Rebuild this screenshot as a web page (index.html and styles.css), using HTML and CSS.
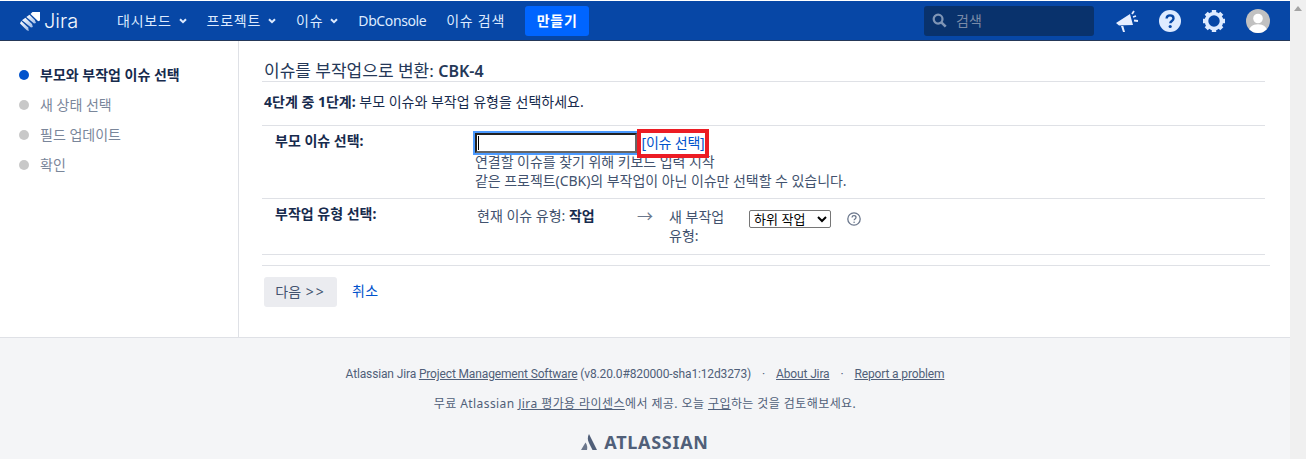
FILE: index.html
```html
<!DOCTYPE html>
<html lang="ko">
<head>
<meta charset="utf-8">
<title>이슈를 부작업으로 변환: CBK-4</title>
<link rel="stylesheet" href="styles.css">
</head>
<body>
<div class="page">
  <header class="topbar">
    <a class="logo" href="#">
      <svg class="logo-mark" viewBox="0 0 20 20" width="20" height="20">
        <defs>
          <linearGradient id="fade" x1="0" y1="0" x2="1" y2="1"><stop offset="0" stop-color="#fff"/><stop offset="1" stop-color="#9fbbe6"/></linearGradient>
        </defs>
        <path d="M20 1v8.500l-1.800.8L10.500 3 12.500 1z" fill="#fff"/>
        <path d="M9.500 3.800 14.800 9l1.200 3-2 .6L6.300 6z" fill="url(#fade)"/>
        <path d="M5.400 6.800 12 13l.9 3-1.900.5L2 9.200z" fill="url(#fade)"/>
        <path d="M1.200 10 8.200 16.600 8.800 20 6.800 19.300 0 12.500z" fill="url(#fade)"/>
      </svg>
      <span class="logo-text">Jira</span>
    </a>
    <nav class="nav">
      <a class="nav-item kr" href="#">대시보드<svg class="caret" viewBox="0 0 8 6" width="8" height="6"><path d="M1 1.200 4 4.200 7 1.200" fill="none" stroke="#deebff" stroke-width="2"/></svg></a>
      <a class="nav-item kr" href="#">프로젝트<svg class="caret" viewBox="0 0 8 6" width="8" height="6"><path d="M1 1.200 4 4.200 7 1.200" fill="none" stroke="#deebff" stroke-width="2"/></svg></a>
      <a class="nav-item kr" href="#">이슈<svg class="caret" viewBox="0 0 8 6" width="8" height="6"><path d="M1 1.200 4 4.200 7 1.200" fill="none" stroke="#deebff" stroke-width="2"/></svg></a>
      <a class="nav-item latin" href="#">DbConsole</a>
      <a class="nav-item kr" href="#">이슈 검색</a>
      <a class="create" href="#">만들기</a>
    </nav>
    <div class="tools">
      <div class="search">
        <svg viewBox="0 0 16 16" width="15" height="15"><circle cx="6.500" cy="6.500" r="4.700" fill="none" stroke="#7f95b5" stroke-width="2.400"/><path d="M10 10l4.600 4.600" stroke="#7f95b5" stroke-width="2.800"/></svg>
        <span>검색</span>
      </div>
      <svg class="tool-icon megaphone" viewBox="0 0 24 24" width="24" height="24"><path d="M1 14 15 5l3 11-9 .2-5 .3z" fill="#e6eeff"/><path d="M6 17l2 6h2l-1.700-6z" fill="#e6eeff"/><path d="M18 8l3-1M17 5l2-3M19 11.500l4 .5" stroke="#e6eeff" stroke-width="1.800"/></svg>
      <svg class="tool-icon help" viewBox="0 0 22 22" width="22" height="22"><circle cx="11" cy="11" r="11" fill="#deebff"/><path d="M7.600 8.500C7.800 6.500 9.200 5.400 11 5.400c2.100 0 3.500 1.200 3.500 3 0 2.600-3.200 2.500-3.200 4.900" fill="none" stroke="#0747a6" stroke-width="2.400"/><circle cx="11.200" cy="16.500" r="1.600" fill="#0747a6"/></svg>
      <svg class="tool-icon gear" viewBox="0 0 24 24" width="24" height="24"><circle cx="12" cy="12" r="7.500" fill="none" stroke="#deebff" stroke-width="3.600"/><g stroke="#deebff" stroke-width="4.400"><path d="M12 1v3.500M12 19.500V23M1 12h3.500M19.500 12H23M4.200 4.200l2.500 2.500M17.300 17.300l2.500 2.500M4.200 19.800l2.500-2.500M17.300 6.700l2.500-2.500"/></g></svg>
      <svg class="avatar" viewBox="0 0 24 24" width="24" height="24"><circle cx="12" cy="12" r="12" fill="#c1c1c1"/><clipPath id="av"><circle cx="12" cy="12" r="12"/></clipPath><g clip-path="url(#av)" fill="#fff"><circle cx="12" cy="9.500" r="4.800"/><path d="M2.500 24c0-6 4-8.800 9.500-8.800s9.500 2.800 9.500 8.800z"/></g></svg>
    </div>
  </header>

  <div class="main">
    <aside class="sidebar">
      <ol class="steps">
        <li class="step active">부모와 부작업 이슈 선택</li>
        <li class="step">새 상태 선택</li>
        <li class="step">필드 업데이트</li>
        <li class="step">확인</li>
      </ol>
    </aside>
    <section class="content">
      <h2 class="title">이슈를 부작업으로 변환: <b>CBK-4</b></h2>
      <p class="intro"><b>4단계 중 1단계:</b> 부모 이슈와 부작업 유형을 선택하세요.</p>
      <div class="form-row first">
        <div class="label">부모 이슈 선택:</div>
        <div class="field">
          <div class="picker">
            <input class="text-input" type="text" aria-label="부모 이슈">
            <a class="pick-link" href="#">[이슈 선택]</a>
          </div>
          <div class="hint">연결할 이슈를 찾기 위해 키보드 입력 시작</div>
          <div class="hint">같은 프로젝트(CBK)의 부작업이 아닌 이슈만 선택할 수 있습니다.</div>
        </div>
      </div>
      <div class="form-row second">
        <div class="label">부작업 유형 선택:</div>
        <div class="type-field">
          <div class="current">현재 이슈 유형: <b>작업</b></div>
          <div class="arrow">→</div>
          <div class="new-label">새 부작업 유형:</div>
          <select class="type-select" aria-label="새 부작업 유형"><option>하위 작업</option></select>
          <svg class="q-icon" viewBox="0 0 14 14" width="14" height="14"><circle cx="7" cy="7" r="6.200" fill="none" stroke="#6b778c" stroke-width="1.300"/><path d="M5 5.500C5.100 4.300 5.900 3.700 7 3.700c1.200 0 2 .7 2 1.700 0 1.500-1.900 1.500-1.900 2.900" fill="none" stroke="#6b778c" stroke-width="1.300"/><circle cx="7.100" cy="10.200" r=".8" fill="#6b778c"/></svg>
        </div>
      </div>
      <div class="actions">
        <button class="next" type="button">다음 <span class="chev">&gt;&gt;</span></button>
        <a class="cancel" href="#">취소</a>
      </div>
    </section>
  </div>

  <footer class="footer">
    <p class="foot-line first-line">Atlassian Jira <a href="#">Project Management Software</a> (v8.20.0#820000-sha1:12d3273)<span class="dot">·</span><a href="#">About Jira</a><span class="dot">·</span><a href="#">Report a problem</a></p>
    <p class="foot-line second-line">무료 Atlassian <a href="#">Jira 평가용 라이센스</a>에서 제공. 오늘 <a href="#">구입</a>하는 것을 검토해보세요.</p>
    <div class="atl">
      <svg viewBox="0 0 16 16" width="16" height="16"><path d="M4.500 8.500 0 16h6c.6-2.600.2-5.200-1.500-7.500z" fill="#6b778c"/><path d="M8 0C6.300 3.200 6.500 6 8 9l3.500 7H16z" fill="#505f79"/></svg>
      <span>ATLASSIAN</span>
    </div>
  </footer>
</div>
<div class="scrollbar"><span class="scroll-up"></span></div>
</body>
</html>
```

FILE: styles.css
```css
* { box-sizing: border-box; }
html, body { margin: 0; height: 459px; overflow: hidden; background: #fff; }
body {
  display: flex;
  font: 14px/20px "Noto Sans", "Noto Sans CJK KR", sans-serif;
  color: #172b4d;
}
a { text-decoration: none; }
b { font-weight: 700; }
.page { width: 1290px; height: 459px; padding-top: 1px; overflow: hidden; }
.scrollbar { width: 16px; background: #f0f0f0; }
.scroll-up {
  display: block;
  width: 0; height: 0;
  margin: 6px auto 0;
  border: 4px solid transparent;
  border-top: 0;
  border-bottom: 5px solid #a3a3a3;
}

.topbar {
  height: 40px;
  background: #0747a6;
  border-bottom: 1px solid #253858;
  display: flex;
  align-items: center;
  padding-left: 20px;
  color: #deebff;
}
.logo { display: flex; align-items: center; color: #fff; width: 97px; }
.logo-text { font: 300 20px/24px "Inter", "Noto Sans", sans-serif; margin-left: 4px; color: #f4f7fd; }
.nav { display: flex; align-items: center; }
.nav-item { color: #deebff; display: flex; align-items: center; margin-right: 20px; white-space: nowrap; }
.nav-item.kr { letter-spacing: .75px; }
.nav-item.latin { letter-spacing: -.4px; }
.caret { margin-left: 7px; margin-top: 1px; }
.create {
  background: #0065ff;
  color: #fff;
  font-weight: 700;
  border-radius: 3px;
  width: 64px;
  height: 30px;
  line-height: 30px;
  text-align: center;
  letter-spacing: .75px;
}
.tools { margin-left: auto; display: flex; align-items: center; padding-right: 20px; }
.search {
  width: 170px; height: 30px;
  background: #09326c;
  border-radius: 3px;
  display: flex; align-items: center;
  padding-left: 8px;
  gap: 9px;
  color: #7a8ba8;
  margin-right: 21px;
}
.tool-icon { display: block; }
.megaphone { margin-right: 20px; }
.help { margin-right: 21px; }
.gear { margin-right: 20px; }
.avatar { display: block; }

.main { display: flex; height: 296px; }
.sidebar { width: 239px; border-right: 1px solid #dfe1e6; padding-top: 19px; }
.steps { list-style: none; margin: 0; padding: 0 0 0 19px; }
.step { height: 30px; line-height: 30px; color: #7a869a; position: relative; padding-left: 21px; display: flex; align-items: center; }
.step::before {
  content: "";
  position: absolute; left: 0; top: 10px;
  width: 10px; height: 10px; border-radius: 50%;
  background: #c8c8c8;
}
.step.active { color: #172b4d; font-weight: 700; }
.step.active::before { background: #0052cc; }

.content { flex: 1; padding: 20px 25px 0 23px; }
.title {
  font-size: 17px; line-height: 20px; font-weight: 400;
  margin: 0;
  padding: 0 0 0 2px;
  border-bottom: 1px solid #dfe1e6;
  height: 21px;
  color: #253858;
}
.title b { font-weight: 600; font-size: 16px; }
.intro { margin: 10px 0 13px; padding-left: 2px; height: 20px; }
.form-row { display: flex; border-top: 1px solid #dfe1e6; padding-left: 13px; }
.form-row.first { height: 73px; padding-top: 5px; }
.form-row.second { height: 57px; padding-top: 5px; border-bottom: 1px solid #dfe1e6; }
.label { width: 200px; font-weight: 700; }
.picker { display: flex; align-items: flex-start; height: 21px; }
.text-input {
  width: 162px; height: 20px;
  margin: 2px 0 0 0;
  border: 2px solid;
  border-color: #222 #666 #666 #222;
  outline: 2px solid #4c9aff;
  outline-offset: 0;
  background: #fff linear-gradient(#000, #000) no-repeat 1px 1px / 1px 14px;
  padding: 0;
}
.pick-link {
  width: 72px; height: 29px;
  margin-top: -2px;
  border: 4px solid #ec1c24;
  color: #0052cc;
  line-height: 20px;
  letter-spacing: -.2px;
  text-align: center;
  white-space: nowrap;
  overflow: hidden;
  display: block;
  position: relative;
  background: #fff;
}
.hint { color: #42526e; line-height: 19px; letter-spacing: -.05px; }
.type-field { display: flex; align-items: flex-start; padding-top: 2px; padding-left: 2px; }
.current { width: 160px; color: #42526e; }
.current b { color: #172b4d; font-weight: 600; }
.arrow { width: 32px; color: #6b778c; font-size: 16px; }
.new-label { width: 80px; padding-right: 10px; color: #42526e; line-height: 19px; margin-top: 1px; }
.type-select {
  width: 82px; height: 18px;
  font: 13px/14px "Liberation Sans", "Noto Sans CJK KR", sans-serif;
  color: #000; background: #fff;
  border: 1px solid #767676; border-radius: 2px;
  padding: 0;
  margin-top: 4px;
}
.q-icon { margin: 6px 0 0 16px; display: block; }
.actions { border-top: 1px solid #dfe1e6; margin-top: 10px; margin-right: -5px; padding: 11px 0 0 2px; display: flex; align-items: center; }
.next {
  width: 73px; height: 30px;
  background: #ebecf0; color: #42526e;
  border: 0; border-radius: 3px;
  font: inherit; padding: 0;
}
.chev { letter-spacing: 2px; margin-left: 1px; }
.cancel { margin-left: 15px; color: #0052cc; margin-top: -2px; letter-spacing: .3px; }

.footer { background: #f4f5f7; border-top: 1px solid #dfe1e6; height: 122px; text-align: center; font-size: 12px; color: #505f79; padding-top: 26px; }
.foot-line { margin: 0; height: 20px; line-height: 20px; }
.foot-line a { color: #505f79; text-decoration: underline; }
.first-line { font-family: "Roboto", "Noto Sans CJK KR", sans-serif; letter-spacing: -.14px; }
.second-line { margin-top: 10px; letter-spacing: .42px; }
.dot { margin: 0 11px; }
.atl { margin-top: 18px; display: flex; justify-content: center; align-items: center; gap: 7px; color: #505f79; font: 700 18px/20px "Noto Sans", sans-serif; letter-spacing: .7px; }
```
